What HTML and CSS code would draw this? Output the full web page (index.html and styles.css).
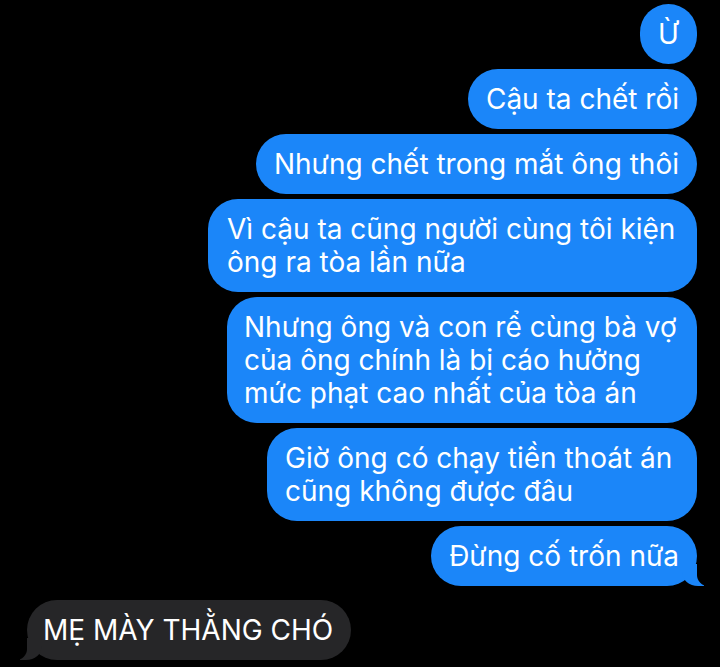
FILE: index.html
```html
<!DOCTYPE html>
<html>
<head>
    <meta charset="UTF-8">
    <meta name="viewport" content="width=device-width, initial-scale=1.0">
    <title>Tin nhắn</title>
    <link rel="stylesheet" href="styles.css">
</head>

<body>
    <div class="thread">
        <div class="bubble sent round">Ừ</div>
        <div class="bubble sent">Cậu ta chết rồi</div>
        <div class="bubble sent">Nhưng chết trong mắt ông thôi</div>
        <div class="bubble sent wide">Vì cậu ta cũng người cùng tôi kiện ông ra tòa lần nữa</div>
        <div class="bubble sent mid">Nhưng ông và con rể cùng bà vợ của ông chính là bị cáo hưởng mức phạt cao nhất của tòa án</div>
        <div class="bubble sent narrow">Giờ ông có chạy tiền thoát án cũng không được đâu</div>
        <div class="bubble sent tail">Đừng cố trốn nữa</div>
        <div class="bubble received tail">MẸ MÀY THẰNG CHÓ</div>
    </div>
</body>

</html>
```

FILE: styles.css
```css
body {
    margin: 0;
    padding: 0;
    background-color: #000;
    font-family: Inter, "Noto Sans", sans-serif;
    color: #fff;
}

.thread {
    display: flex;
    flex-direction: column;
    align-items: flex-end;
    gap: 5px;
    padding: 4px 23px 0 27px;
}

.bubble {
    position: relative;
    box-sizing: border-box;
    padding: 14px 18px 13px 18px;
    font-size: 28px;
    line-height: 33px;
    border-radius: 30px;
}

.sent {
    background-color: #1b86f9;
}

.received {
    align-self: flex-start;
    margin-top: 9px;
    padding-left: 16px;
    background-color: #262628;
}

.round {
    min-width: 57px;
    text-align: center;
}

.wide {
    width: 489px;
    padding-left: 19px;
}

.mid {
    width: 470px;
    padding-left: 17px;
}

.narrow {
    width: 430px;
}

/* the little tail under the last bubble of a group */
.tail::before,
.tail::after {
    content: "";
    position: absolute;
    bottom: 0;
    height: 22px;
}

.sent.tail::before {
    right: -7px;
    width: 22px;
    background-color: #1b86f9;
    border-bottom-left-radius: 16px 14px;
}

.sent.tail::after {
    right: -27px;
    width: 27px;
    background-color: #000;
    border-bottom-left-radius: 11px;
}

.received.tail::before {
    left: -7px;
    width: 22px;
    background-color: #262628;
    border-bottom-right-radius: 16px 14px;
}

.received.tail::after {
    left: -27px;
    width: 27px;
    background-color: #000;
    border-bottom-right-radius: 11px;
}
```
